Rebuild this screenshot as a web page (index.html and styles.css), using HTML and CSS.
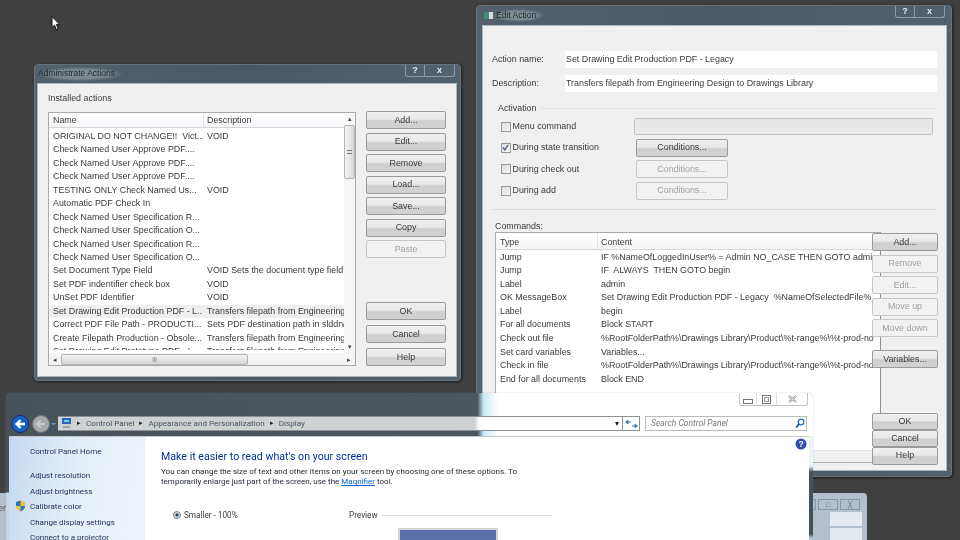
FILE: index.html
```html
<!DOCTYPE html>
<html lang="en">
<head>
<meta charset="utf-8">
<title>Desktop</title>
<link rel="stylesheet" href="styles.css">
</head>
<body>
<div class="desktop">
  <svg class="cursor" width="10" height="15" viewBox="0 0 10 15"><path d="M1 .5V11.5L3.6 9.2 5.4 13.6 7.2 12.8 5.4 8.6H8.8Z" fill="#fff" stroke="#111" stroke-width="1"/></svg>

  <section class="win admin">
    <header class="tbar">
      <span class="ttl">Administrate Actions</span>
      <div class="caps"><span class="cap">?</span><span class="cap capx">x</span></div>
    </header>
    <div class="client admin-client">
      <div class="lbl installed">Installed actions</div>
      <div class="admin-body">
        <div class="list admin-list">
          <div class="lhead admin-cols"><span>Name</span><span>Description</span></div>
          <div class="rows">
            <div class="row admin-cols"><span>ORIGINAL DO NOT CHANGE!!  Vict...</span><span>VOID</span></div>
            <div class="row admin-cols"><span>Check Named User Approve PDF....</span><span></span></div>
            <div class="row admin-cols"><span>Check Named User Approve PDF....</span><span></span></div>
            <div class="row admin-cols"><span>Check Named User Approve PDF....</span><span></span></div>
            <div class="row admin-cols"><span>TESTING ONLY Check Named Us...</span><span>VOID</span></div>
            <div class="row admin-cols"><span>Automatic PDF Check In</span><span></span></div>
            <div class="row admin-cols"><span>Check Named User Specification R...</span><span></span></div>
            <div class="row admin-cols"><span>Check Named User Specification O...</span><span></span></div>
            <div class="row admin-cols"><span>Check Named User Specification R...</span><span></span></div>
            <div class="row admin-cols"><span>Check Named User Specification O...</span><span></span></div>
            <div class="row admin-cols"><span>Set Document Type Field</span><span>VOID Sets the document type field</span></div>
            <div class="row admin-cols"><span>Set PDF indentifier check box</span><span>VOID</span></div>
            <div class="row admin-cols"><span>UnSet PDF Identifier</span><span>VOID</span></div>
            <div class="row admin-cols sel"><span>Set Drawing Edit Production PDF - L...</span><span>Transfers filepath from Engineering</span></div>
            <div class="row admin-cols"><span>Correct PDF File Path - PRODUCTI...</span><span>Sets PDF destination path in slddrw</span></div>
            <div class="row admin-cols"><span>Create Filepath Production - Obsole...</span><span>Transfers filepath from Engineering</span></div>
            <div class="row admin-cols"><span>Set Drawing Edit Prototype PDF - L...</span><span>Transfers filepath from Engineering</span></div>
          </div>
          <div class="vscroll">
            <span class="sarrow">&#9652;</span>
            <span class="vthumb"><i></i></span>
            <span class="sgrow"></span>
            <span class="sarrow">&#9662;</span>
          </div>
          <div class="hscroll">
            <span class="harrow">&#9666;</span>
            <span class="hthumb">|||</span>
            <span class="sgrow"></span>
            <span class="harrow">&#9656;</span>
          </div>
        </div>
        <div class="btncol">
          <div class="btngroup">
            <button class="btn">Add...</button>
            <button class="btn">Edit...</button>
            <button class="btn">Remove</button>
            <button class="btn">Load...</button>
            <button class="btn">Save...</button>
            <button class="btn">Copy</button>
            <button class="btn off">Paste</button>
          </div>
          <div class="btngroup">
            <button class="btn">OK</button>
            <button class="btn">Cancel</button>
            <button class="btn">Help</button>
          </div>
        </div>
      </div>
    </div>
  </section>

  <section class="win edit">
    <header class="tbar">
      <span class="appicon"></span>
      <span class="ttl">Edit Action</span>
      <div class="caps"><span class="cap">?</span><span class="cap capx">x</span></div>
    </header>
    <div class="client edit-client">
      <div class="field"><span class="flabel">Action name:</span><span class="finput">Set Drawing Edit Production PDF - Legacy</span></div>
      <div class="field"><span class="flabel">Description:</span><span class="finput">Transfers filepath from Engineering Design to Drawings Library</span></div>
      <div class="group-legend"><span>Activation</span><i></i></div>
      <div class="act">
        <div class="actrow"><span class="check"><i class="box"></i>Menu command</span><span class="menuinput"></span></div>
        <div class="actrow"><span class="check"><i class="box on"><svg width="9" height="9" viewBox="0 0 9 9"><path d="M2 4.500 3.800 6.800 7 2" fill="none" stroke="#4a5a90" stroke-width="1.300"/></svg></i>During state transition</span><button class="btn cond">Conditions...</button></div>
        <div class="actrow"><span class="check"><i class="box"></i>During check out</span><button class="btn cond off">Conditions...</button></div>
        <div class="actrow"><span class="check"><i class="box"></i>During add</span><button class="btn cond off">Conditions...</button></div>
      </div>
      <hr class="sep">
      <div class="lbl cmdlbl">Commands:</div>
      <div class="cmdarea">
        <div class="list cmdlist">
          <div class="lhead cmd-cols"><span>Type</span><span>Content</span></div>
          <div class="rows">
            <div class="row cmd-cols"><span>Jump</span><span>IF %NameOfLoggedInUser% = Admin NO_CASE THEN GOTO admin</span></div>
            <div class="row cmd-cols"><span>Jump</span><span>IF  ALWAYS  THEN GOTO begin</span></div>
            <div class="row cmd-cols"><span>Label</span><span>admin</span></div>
            <div class="row cmd-cols"><span>OK MessageBox</span><span>Set Drawing Edit Production PDF - Legacy  %NameOfSelectedFile%</span></div>
            <div class="row cmd-cols"><span>Label</span><span>begin</span></div>
            <div class="row cmd-cols"><span>For all documents</span><span>Block START</span></div>
            <div class="row cmd-cols"><span>Check out file</span><span>%RootFolderPath%\Drawings Library\Product\%t-range%\%t-prod-no</span></div>
            <div class="row cmd-cols"><span>Set card variables</span><span>Variables...</span></div>
            <div class="row cmd-cols"><span>Check in file</span><span>%RootFolderPath%\Drawings Library\Product\%t-range%\%t-prod-no</span></div>
            <div class="row cmd-cols"><span>End for all documents</span><span>Block END</span></div>
          </div>
          <div class="cmdscroll"></div>
        </div>
        <div class="cmdbtns">
          <button class="btn">Add...</button>
          <button class="btn off">Remove</button>
          <button class="btn off">Edit...</button>
          <button class="btn off">Move up</button>
          <button class="btn off">Move down</button>
          <button class="btn vars">Variables...</button>
          <div class="okgroup">
            <button class="btn">OK</button>
            <button class="btn">Cancel</button>
            <button class="btn">Help</button>
          </div>
        </div>
      </div>
    </div>
  </section>

  <section class="behind">
    <span class="behind-text">er</span>
    <div class="behind-caps"><span></span><span>&#9633;</span><span>&#9587;</span></div>
    <div class="behind-bar"></div>
    <div class="behind-bar two"></div>
  </section>

  <section class="cp">
    <div class="cp-top">
      <div class="cp-caps">
        <span class="cmin"></span><span class="cmax"></span>
        <span class="cclose"><svg width="9" height="8" viewBox="0 0 9 8"><path d="M1 1 8 7M8 1 1 7" stroke="#8a8f93" stroke-width="2.200"/><path d="M1 1 8 7M8 1 1 7" stroke="#fff" stroke-width=".8"/></svg></span>
      </div>
    </div>
    <div class="cp-nav">
      <svg class="navbtns" width="48" height="20" viewBox="0 0 48 20">
        <circle cx="31" cy="10" r="8.500" fill="#a4a8ab" stroke="#6c7277"/>
        <path d="M35 10H28M30.500 6.500 27 10l3.500 3.500" fill="none" stroke="#c9cccf" stroke-width="2"/>
        <circle cx="10" cy="10" r="8.500" fill="#1b5fc4" stroke="#0b2f6e"/>
        <path d="M15 10H7M10.500 6 6.500 10l4 4" fill="none" stroke="#fff" stroke-width="2.400"/>
        <path d="M41 9h5l-2.500 2.500z" fill="#5b9bd8"/>
      </svg>
      <div class="crumbs">
        <svg class="crumbicon" width="10" height="11" viewBox="0 0 10 11"><rect x="0" y="0" width="9" height="6" fill="#2a66b8"/><rect x="2" y="2" width="5" height="2" fill="#6fd0e0"/><rect x="1" y="8" width="7" height="2" fill="#9aa3ac"/></svg>
        <span class="cr-sep">&#9656;</span><span>Control Panel</span>
        <span class="cr-sep">&#9656;</span><span>Appearance and Personalization</span>
        <span class="cr-sep">&#9656;</span><span>Display</span>
        <span class="sgrow"></span>
        <span class="cr-drop">&#9662;</span>
        <span class="cr-refresh"><svg width="13" height="10" viewBox="0 0 13 10"><path d="M6 3H1.500M3.300 1.300 1.300 3l2 1.700M7 7h4.500M9.700 5.300l2 1.700-2 1.700" fill="none" stroke="#2c6cb8" stroke-width="1.200"/></svg></span>
      </div>
      <div class="cp-search"><span>Search Control Panel</span>
        <svg width="10" height="11" viewBox="0 0 10 11"><circle cx="6" cy="4" r="2.800" fill="none" stroke="#2a6cb4" stroke-width="1.300"/><path d="M4 6 1.300 9.500" stroke="#1a4c90" stroke-width="1.800"/></svg>
      </div>
    </div>
    <div class="cp-body">
      <aside class="cp-side">
        <div class="side-home">Control Panel Home</div>
        <div class="side-link">Adjust resolution</div>
        <div class="side-link">Adjust brightness</div>
        <div class="side-link shielded">
          <svg class="shield" width="11" height="12" viewBox="0 0 11 12"><path d="M5.500.5 10 2V6c0 3-2 4.500-4.500 5.500C3 10.500 1 9 1 6V2Z" fill="#f0c030"/><path d="M5.500.5V6H1V2ZM5.500 6H10c0 3-2 4.500-4.500 5.500Z" fill="#2f73c4"/></svg>
          Calibrate color</div>
        <div class="side-link">Change display settings</div>
        <div class="side-link">Connect to a projector</div>
      </aside>
      <main class="cp-main">
        <svg class="help" width="12" height="12" viewBox="0 0 12 12"><circle cx="6" cy="6" r="5.500" fill="#2f4fa8"/><text x="6" y="9" text-anchor="middle" font-size="8.500" font-family="Liberation Sans" font-weight="700" fill="#fff">?</text></svg>
        <h1 class="cp-h">Make it easier to read what's on your screen</h1>
        <p class="cp-p">You can change the size of text and other items on your screen by choosing one of these options. To<br>temporarily enlarge just part of the screen, use the <a class="cp-a">Magnifier</a> tool.</p>
        <div class="cp-opts">
          <span class="radio-wrap"><i class="radio"></i>Smaller - 100%</span>
          <div class="preview">
            <div class="preview-head"><span>Preview</span><i></i></div>
            <div class="monitor"></div>
          </div>
        </div>
      </main>
    </div>
  </section>
</div>
</body>
</html>
```

FILE: styles.css
```css
* { box-sizing: border-box; }
html, body { margin: 0; padding: 0; }
body { width: 960px; height: 540px; overflow: hidden; background: #404040; }
.desktop {
  position: relative; width: 960px; height: 540px; overflow: hidden;
  background: #404040; color: #3a3a3a;
  font: 8.9px/13px "Liberation Sans", Arial, sans-serif;
  filter: blur(.3px);
}
.cursor { position: absolute; left: 51px; top: 16px; }

/* Classic dialog windows */
.win {
  position: absolute; display: flex; flex-direction: column;
  background: linear-gradient(90deg, #52616b, #4a5963 50%, #52616b);
  border: 1px solid #68727a; border-radius: 4px;
  box-shadow: 1px 1px 3px rgba(0,0,0,.6);
  padding: 0 3px 3px 2px;
}
.admin { left: 34px; top: 64px; width: 427px; height: 317px; }
.edit { left: 476px; top: 5px; width: 476px; height: 472px; padding: 0 4px 5px 5px; }
.tbar { height: 18px; display: flex; align-items: center; position: relative; flex: none; }
.edit .tbar { height: 19px; }
.ttl {
  padding: 0 8px 2px 1px; color: #1f2528; font-size: 8.500px; line-height: 12px;
  background: radial-gradient(closest-side, rgba(170,180,186,.6), rgba(170,180,186,.45) 70%, rgba(170,180,186,0));
}
.edit .ttl { padding: 0 8px 1px 3px; }
.appicon { width: 9px; height: 7px; margin-left: 2px; background: linear-gradient(90deg, #3f8a78 50%, #d8dde0 50%); }
.caps { margin-left: auto; margin-right: 2px; align-self: flex-start; display: flex; height: 12px; border: 1px solid #8f999f; border-top: 0; border-radius: 0 0 3px 3px; }
.cap { width: 18px; text-align: center; color: #e4e8ea; font: 700 9px/11px "Liberation Sans", sans-serif; }
.capx { width: 30px; border-left: 1px solid #8f999f; }
.client { flex: 1; min-height: 0; background: #f0f0f0; border: 1px solid #aeb5b9; }

.btn {
  display: block; width: 80px; height: 18px; padding: 0; margin: 0;
  border: 1px solid #979b9e; border-radius: 2px;
  background: linear-gradient(#f0f0f0, #e8e8e8 45%, #cfcfcf 55%, #d2d2d2);
  color: #3a3a3a; font: 8.900px/15px "Liberation Sans", Arial, sans-serif; text-align: center;
}
.btn.off { background: #f2f2f2; border-color: #c4c6c8; color: #a0a0a0; }

.list { position: relative; background: #fff; border: 1px solid #a8abae; overflow: hidden; }
.lhead { height: 15px; background: linear-gradient(#fff, #f4f5f7); border-bottom: 1px solid #d6d8dc; line-height: 15px; }
.row { height: 13.450px; line-height: 13.450px; white-space: pre; }
.row span { overflow: hidden; display: block; }
.row.sel { background: #efefef; }
.lhead span + span { border-left: 1px solid #e2e3e5; padding-left: 3px; }
.row span + span { padding-left: 4px; }

/* Administrate Actions */
.admin-client { padding: 8px 10px 10px 10px; display: flex; flex-direction: column; }
.lbl { flex: none; }
.installed { height: 20px; }
.admin-body { flex: 1; min-height: 0; display: flex; gap: 10px; }
.admin-list { width: 308px; }
.admin-cols { display: grid; grid-template-columns: 150px 142px; padding-left: 4px; }
.rows { padding-top: 2px; }
.admin-list .rows { height: 222px; overflow: hidden; }
.vscroll { position: absolute; right: 0; top: 0; bottom: 12px; width: 11px; display: flex; flex-direction: column; background: #f6f6f6; }
.sarrow { height: 12px; text-align: center; font-size: 7px; line-height: 12px; color: #444; flex: none; }
.vthumb { height: 54px; flex: none; border: 1px solid #b4b4b4; border-radius: 2px; background: linear-gradient(90deg, #f4f4f4, #d8d8d8); position: relative; }
.vthumb i { position: absolute; left: 2px; right: 2px; top: 24px; height: 4px; border-top: 1px solid #777; border-bottom: 1px solid #777; }
.sgrow { flex: 1; }
.hscroll { position: absolute; left: 0; right: 0; bottom: 0; height: 12px; display: flex; background: #f4f4f4; align-items: center; }
.harrow { width: 12px; text-align: center; font-size: 7px; color: #444; flex: none; }
.hthumb { width: 187px; height: 11px; flex: none; border: 1px solid #b4b4b4; border-radius: 2px; background: linear-gradient(#f4f4f4, #d4d4d4); text-align: center; font-size: 6px; line-height: 8px; color: #666; }
.btncol { display: flex; flex-direction: column; justify-content: space-between; width: 80px; margin-top: -1px; }
.btngroup { display: flex; flex-direction: column; gap: 3.500px; }
.btngroup + .btngroup { gap: 5px; }

/* Edit Action */
.edit-client { padding: 25px 9px 0 9px; display: flex; flex-direction: column; }
.field { display: flex; align-items: center; height: 17px; margin-bottom: 7px; }
.flabel { width: 73px; flex: none; }
.finput { flex: 1; height: 17px; background: #fff; padding: 0 1px; line-height: 16px; }
.group-legend { display: flex; align-items: center; gap: 3px; margin: 3px 0 0 6px; height: 13px; }
.group-legend i { flex: 1; height: 1px; background: #e2e5e8; }
.act { margin: 1px 0 0 9px; }
.actrow { display: flex; align-items: center; height: 21.300px; }
.check { width: 135px; display: flex; align-items: center; gap: 1.500px; flex: none; }
.box { width: 10px; height: 10px; border: 1px solid #989898; background: linear-gradient(135deg, #dcdcdc, #f4f4f4); display: block; line-height: 0; }
.box svg { margin: -1px 0 0 -1px; }
.menuinput { width: 299px; height: 17px; margin-left: -2px; background: #e8e8e8; border: 1px solid #c2c4c6; border-radius: 2px; }
.cond { width: 92px; height: 18px; }
.sep { height: 1px; border: 0; margin: 8px 0 0; background: #dadde0; }
.cmdlbl { margin: 11px 0 0 3px; height: 11px; line-height: 11px; }
.cmdarea { flex: 1; display: flex; margin-left: 3px; min-height: 0; position: relative; }
.cmdlist { width: 386px; flex: none; border-right-color: #8e9093; margin-bottom: 7px; }
.cmd-cols { display: grid; grid-template-columns: 97px 284px; padding-left: 4px; }
.cmdlist .lhead { height: 17px; line-height: 18px; }
.cmdlist .rows { padding-top: .500px; }
.cmdlist .row { height: 13.550px; line-height: 13.550px; }
.cmdscroll { position: absolute; left: 0; right: 0; bottom: 0; height: 12px; background: #f0f0f0; border-top: 1px solid #e6e6e6; }
.cmdbtns { width: 66px; margin: 1px 0 0 -9px; position: relative; display: flex; flex-direction: column; gap: 3.500px; }
.cmdbtns .btn { width: 66px; }
.vars { margin-top: 9.500px; }
.okgroup { margin-top: 41px; display: flex; flex-direction: column; }
.okgroup .btn { height: 17.300px; }

/* Window behind */
.behind { position: absolute; left: -20px; top: 493px; width: 887px; height: 60px; background: #b3c0cc; border-radius: 0 4px 0 0; }
.behind-text { position: absolute; left: 18px; top: 9px; font-size: 9px; color: #555; }
.behind-caps { position: absolute; right: 7px; top: 6px; display: flex; gap: 2px; }
.behind-caps span { width: 20px; height: 11px; border: 1px solid #8998a5; text-align: center; font-size: 7px; line-height: 9px; color: #5e6b76; }
.behind-bar { position: absolute; left: 850px; right: 5px; top: 19px; height: 14px; background: #e4eaef; }
.behind-bar.two { top: 35px; height: 20px; }

/* Control Panel */
.cp {
  position: absolute; left: 6px; top: 393px; width: 807px; height: 160px;
  border-radius: 5px 5px 0 0; overflow: hidden;
  background:
    linear-gradient(transparent 99px, #c8d6e4 100px),
    linear-gradient(90deg, #47525a, #4b565f 58.400%, #c8ecf8 59.200%, #fff 61%);
  box-shadow: 0 0 1px #888; font-family: Roboto, "Liberation Sans", sans-serif;
}
.cp::after {
  content: ""; position: absolute; right: 0; top: 43px; bottom: 0; width: 4px;
  background: linear-gradient(#e8f4fa 30px, #46525a 36px, #46525a 98px, #b4c4d4 102px);
}
.cp-top { height: 23px; display: flex; justify-content: flex-end; padding-right: 5px; }
.cp-caps { display: flex; height: 13px; border: 1px solid #bfc4c8; border-top: 0; border-radius: 0 0 3px 3px; background: #fff; }
.cp-caps span { display: flex; align-items: center; justify-content: center; }
.cmin { width: 17px; border-right: 1px solid #ddd; }
.cmin::before { content: ""; width: 8px; height: 3px; border: 1px solid #777; margin-top: 4px; }
.cmax { width: 19px; }
.cmax::before { content: ""; width: 7px; height: 7px; border: 1px solid #777; box-shadow: inset 0 0 0 1px #fff, inset 0 0 0 2px #999; }
.cclose { width: 31px; border-left: 1px solid #ddd; }
.cp-nav { height: 20px; display: flex; align-items: flex-start; padding: 0 4px; position: relative; }
.navbtns { margin-top: -2px; flex: none; }
.crumbs {
  flex: none; width: 582px; height: 15px; margin-right: 5px; display: flex; align-items: center; gap: 4px;
  padding-left: 4px;
  background: linear-gradient(90deg, #cfd2d3, #cfd2d3 71.700%, #fff 72.500%);
  border: 1px solid #8a9096; border-left: 0;
  font-size: 8.100px; color: #46525c; line-height: 13px;
}
.crumbicon { flex: none; }
.cr-sep { font-size: 7px; color: #222; margin: 0 1px; }
.cr-drop { font-size: 8px; color: #222; }
.cr-refresh { width: 17px; height: 13px; border-left: 1px solid #8a9096; margin-left: -1px; display: flex; align-items: center; justify-content: center; }
.cp-search { flex: none; width: 162px; height: 15px; background: #fff; border: 1px solid #b4bcc2; display: flex; align-items: center; justify-content: space-between; padding: 0 1px 0 5px; font-size: 8.500px; font-style: italic; color: #777; }
.cp-body { height: 117px; display: flex; margin: 0 4px 0 3px; background: #fff; border-top: 1px solid #c8c8c8; }
.cp-side { width: 136px; flex: none; padding: 7px 0 0 21px; background: linear-gradient(100deg, #c4d9f0, #e6eff9 50%, #eef4fb); color: #1d2f56; font-size: 8px; line-height: 15.600px; position: relative; }
.side-home { margin-bottom: 8.500px; }
.side-link { white-space: nowrap; }
.shielded { position: relative; }
.shield { position: absolute; left: -15px; top: 1px; }
.cp-main { flex: 1; padding: 0 0 0 16px; position: relative; }
.help { position: absolute; right: 2px; top: 1px; }
.cp-h { margin: 13px 0 0; font-weight: 400; font-size: 10.650px; line-height: 14px; color: #003399; }
.cp-p { margin: 3px 0 0; font-size: 8.030px; line-height: 10.200px; color: #1d2530; }
.cp-a { color: #0066cc; text-decoration: underline; }
.cp-opts { display: flex; margin: 22px 0 0 12px; font-size: 8.200px; line-height: 12px; color: #3a3a3a; }
.radio-wrap { width: 176px; display: flex; align-items: flex-start; gap: 3px; flex: none; }
.radio { width: 8px; height: 8px; margin-top: 2px; border-radius: 50%; background: radial-gradient(circle, #1e4a70 35%, #d8dde0 40%); border: 1px solid #7b8288; }
.preview { flex: none; width: 203px; }
.preview-head { display: flex; align-items: center; gap: 4px; }
.preview-head i { flex: 1; height: 1px; background: #dddddd; }
.monitor { width: 100px; height: 30px; margin: 7px 0 0 49px; border: 2px solid #d6d6d6; background: #5a72a8; }
```
